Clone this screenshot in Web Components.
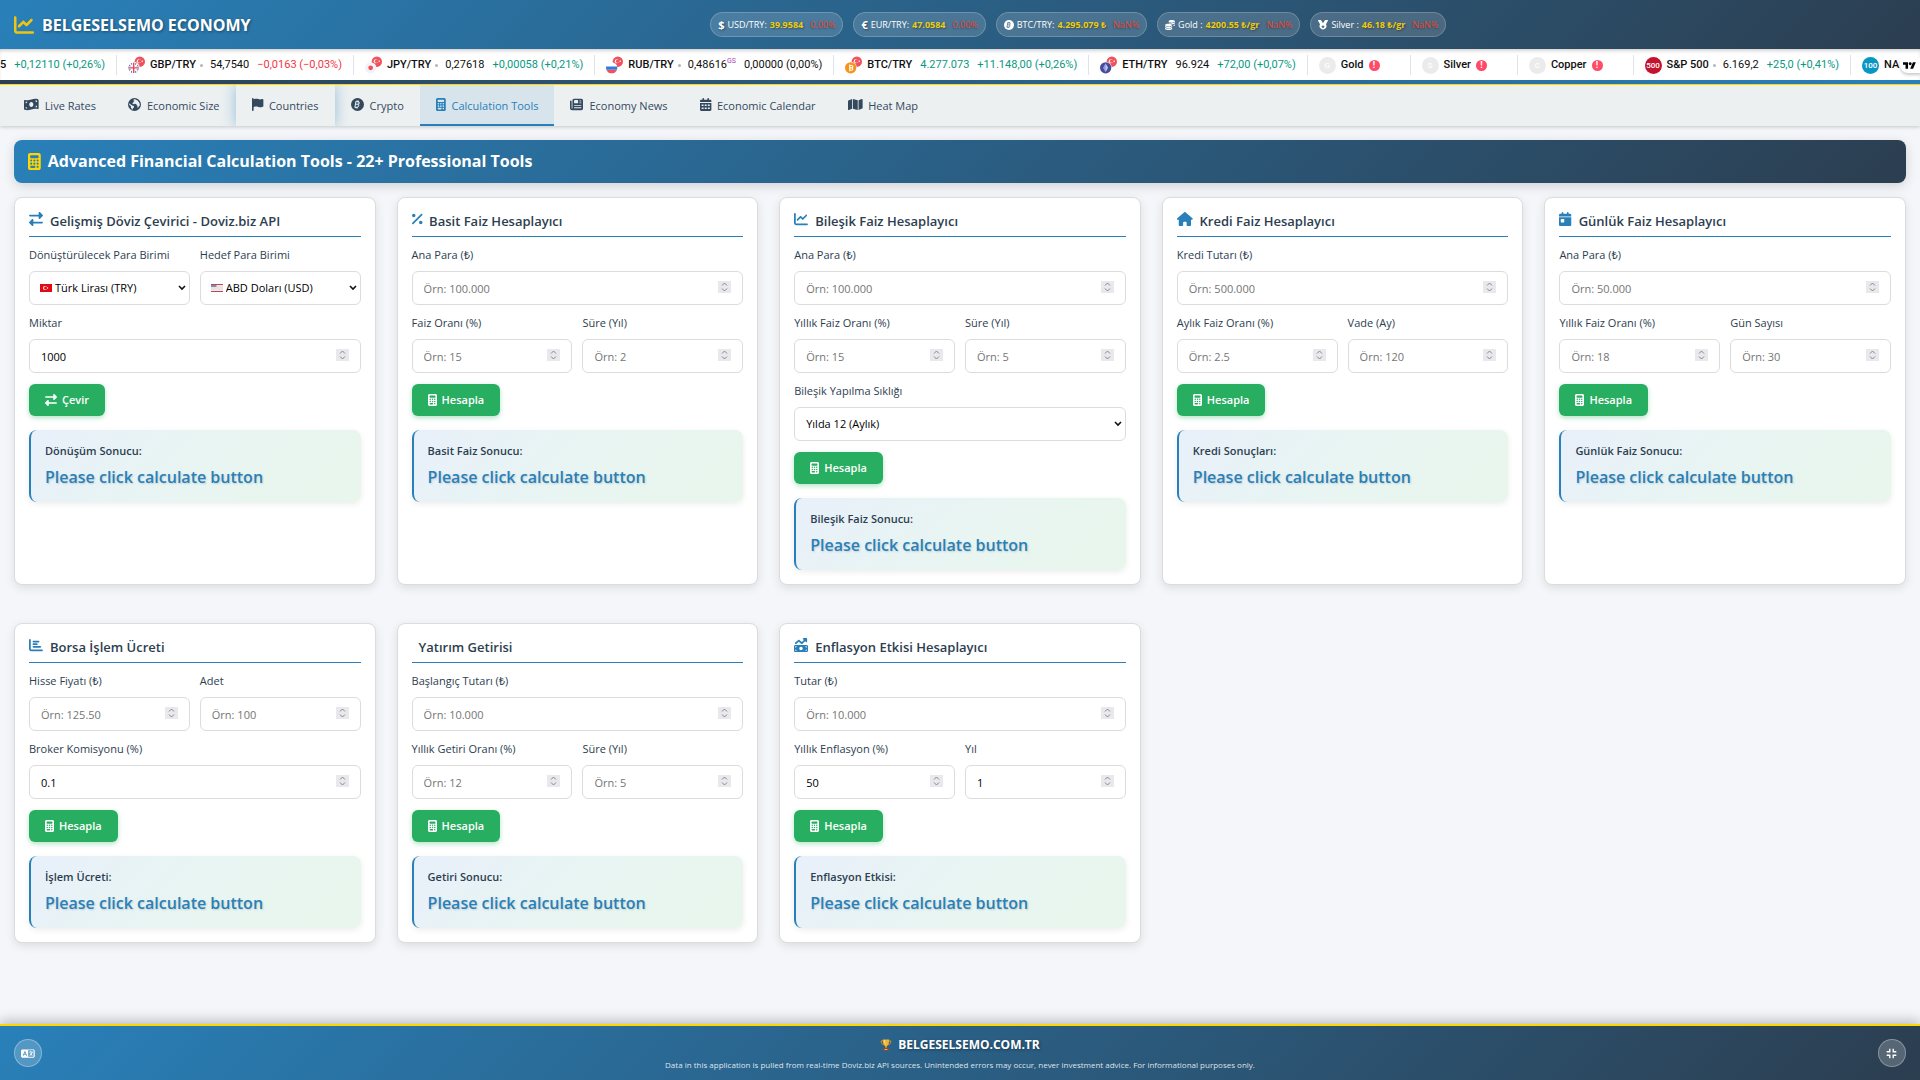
<!DOCTYPE html>
<html lang="tr">
<head>
<meta charset="utf-8">
<title>Belgeselsemo Economy</title>
<style>
:root {
    --primary: #2980b9;
    --dark: #2c3e50;
    --gold: #ffd700;
    --green: #27ae60;
    --line: #dcdcdc;
    --bar: linear-gradient(135deg, #2980b9, #2c3e50);
}
body {
    margin: 0;
    min-height: 100vh;
    display: flex;
    flex-direction: column;
    background: #f5f6fa;
    color: var(--dark);
    font: 11px/16px "Open Sans", "Noto Sans", sans-serif;
}
main {
    flex: 1;
    padding: 14px;
}
.tools {
    display: grid;
    grid-template-columns: repeat(auto-fill, minmax(320px, 1fr));
    gap: 38px 21px;
    margin-top: 14px;
}
</style>
</head>
<body>

<econ-header></econ-header>
<market-ticker></market-ticker>

<nav-tabs>
    <nav-tab icon="money">Live Rates</nav-tab>
    <nav-tab icon="globe">Economic Size</nav-tab>
    <nav-tab icon="flag" glow>Countries</nav-tab>
    <nav-tab icon="bitcoin">Crypto</nav-tab>
    <nav-tab icon="calculator" active>Calculation Tools</nav-tab>
    <nav-tab icon="news">Economy News</nav-tab>
    <nav-tab icon="calendar">Economic Calendar</nav-tab>
    <nav-tab icon="map">Heat Map</nav-tab>
</nav-tabs>

<main>
    <section-banner icon="calculator">Advanced Financial Calculation Tools - 22+ Professional Tools</section-banner>

    <div class="tools">
        <calc-card icon="exchange" heading="Gelişmiş Döviz Çevirici - Doviz.biz API" button="Çevir" button-icon="exchange" result="Dönüşüm Sonucu:">
            <calc-field half label="Dönüştürülecek Para Birimi" options="Türk Lirası (TRY)" flag="tr"></calc-field>
            <calc-field half label="Hedef Para Birimi" options="ABD Doları (USD)" flag="us"></calc-field>
            <calc-field label="Miktar" value="1000"></calc-field>
        </calc-card>

        <calc-card icon="percent" heading="Basit Faiz Hesaplayıcı" result="Basit Faiz Sonucu:">
            <calc-field label="Ana Para (₺)" placeholder="Örn: 100.000"></calc-field>
            <calc-field half label="Faiz Oranı (%)" placeholder="Örn: 15"></calc-field>
            <calc-field half label="Süre (Yıl)" placeholder="Örn: 2"></calc-field>
        </calc-card>

        <calc-card icon="chart" heading="Bileşik Faiz Hesaplayıcı" result="Bileşik Faiz Sonucu:">
            <calc-field label="Ana Para (₺)" placeholder="Örn: 100.000"></calc-field>
            <calc-field half label="Yıllık Faiz Oranı (%)" placeholder="Örn: 15"></calc-field>
            <calc-field half label="Süre (Yıl)" placeholder="Örn: 5"></calc-field>
            <calc-field label="Bileşik Yapılma Sıklığı" options="Yılda 12 (Aylık)"></calc-field>
        </calc-card>

        <calc-card icon="home" heading="Kredi Faiz Hesaplayıcı" result="Kredi Sonuçları:">
            <calc-field label="Kredi Tutarı (₺)" placeholder="Örn: 500.000"></calc-field>
            <calc-field half label="Aylık Faiz Oranı (%)" placeholder="Örn: 2.5"></calc-field>
            <calc-field half label="Vade (Ay)" placeholder="Örn: 120"></calc-field>
        </calc-card>

        <calc-card icon="day" heading="Günlük Faiz Hesaplayıcı" result="Günlük Faiz Sonucu:">
            <calc-field label="Ana Para (₺)" placeholder="Örn: 50.000"></calc-field>
            <calc-field half label="Yıllık Faiz Oranı (%)" placeholder="Örn: 18"></calc-field>
            <calc-field half label="Gün Sayısı" placeholder="Örn: 30"></calc-field>
        </calc-card>

        <calc-card icon="bars" heading="Borsa İşlem Ücreti" result="İşlem Ücreti:">
            <calc-field half label="Hisse Fiyatı (₺)" placeholder="Örn: 125.50"></calc-field>
            <calc-field half label="Adet" placeholder="Örn: 100"></calc-field>
            <calc-field label="Broker Komisyonu (%)" value="0.1"></calc-field>
        </calc-card>

        <calc-card icon="none" heading="Yatırım Getirisi" result="Getiri Sonucu:">
            <calc-field label="Başlangıç Tutarı (₺)" placeholder="Örn: 10.000"></calc-field>
            <calc-field half label="Yıllık Getiri Oranı (%)" placeholder="Örn: 12"></calc-field>
            <calc-field half label="Süre (Yıl)" placeholder="Örn: 5"></calc-field>
        </calc-card>

        <calc-card icon="inflation" heading="Enflasyon Etkisi Hesaplayıcı" result="Enflasyon Etkisi:">
            <calc-field label="Tutar (₺)" placeholder="Örn: 10.000"></calc-field>
            <calc-field half label="Yıllık Enflasyon (%)" value="50"></calc-field>
            <calc-field half label="Yıl" value="1"></calc-field>
        </calc-card>
    </div>
</main>

<econ-footer></econ-footer>

<script>
//--------------------------------------------------------
// Icons: [viewBox width, viewBox height, markup]
//--------------------------------------------------------

const ICONS = {
    none: [0, 512, ""],
    calculator: [384, 512, `<path d="M64 0C28.7 0 0 28.7 0 64V448c0 35.3 28.7 64 64 64H320c35.3 0 64-28.7 64-64V64c0-35.3-28.7-64-64-64H64zM96 64H288c17.7 0 32 14.3 32 32v32c0 17.7-14.3 32-32 32H96c-17.7 0-32-14.3-32-32V96c0-17.7 14.3-32 32-32zm32 160a32 32 0 1 1 -64 0 32 32 0 1 1 64 0zM96 352a32 32 0 1 1 0-64 32 32 0 1 1 0 64zM64 416c0-17.7 14.3-32 32-32h96c17.7 0 32 14.3 32 32s-14.3 32-32 32H96c-17.7 0-32-14.3-32-32zM192 256a32 32 0 1 1 0-64 32 32 0 1 1 0 64zm32 64a32 32 0 1 1 -64 0 32 32 0 1 1 64 0zm64-64a32 32 0 1 1 0-64 32 32 0 1 1 0 64zm32 64a32 32 0 1 1 -64 0 32 32 0 1 1 64 0zM288 448a32 32 0 1 1 0-64 32 32 0 1 1 0 64z"/>`],
    chart: [512, 512, `<path d="M64 64c0-17.7-14.3-32-32-32S0 46.3 0 64V400c0 44.2 35.8 80 80 80H480c17.7 0 32-14.3 32-32s-14.3-32-32-32H80c-8.8 0-16-7.2-16-16V64zm406.6 86.6c12.5-12.5 12.5-32.8 0-45.3s-32.8-12.5-45.3 0L320 210.7l-57.4-57.4c-12.5-12.5-32.8-12.5-45.3 0l-112 112c-12.5 12.5-12.5 32.8 0 45.3s32.8 12.5 45.3 0L240 221.3l57.4 57.4c12.5 12.5 32.8 12.5 45.3 0l128-128z"/>`],
    home: [576, 512, `<path d="M575.8 255.5c0 18-15 32.1-32 32.1h-32l.7 160.2c0 2.7-.2 5.4-.5 8.1V472c0 22.1-17.9 40-40 40H392c-22.1 0-40-17.9-40-40V384c0-17.7-14.3-32-32-32H256c-17.7 0-32 14.3-32 32v88c0 22.1-17.9 40-40 40H104c-22.1 0-40-17.9-40-40V287.6H32c-18 0-32-14-32-32.1c0-9 3-17 10-24L266.4 8c7-7 15-8 22-8s15 2 21 7L564.8 231.5c8 7 12 15 11 24z"/>`],
    day: [448, 512, `<path d="M128 0c17.7 0 32 14.3 32 32V64H288V32c0-17.7 14.3-32 32-32s32 14.3 32 32V64h48c26.5 0 48 21.5 48 48v48H0V112C0 85.5 21.5 64 48 64H96V32c0-17.7 14.3-32 32-32zM0 192H448V464c0 26.5-21.5 48-48 48H48c-26.5 0-48-21.5-48-48V192zm80 64c-8.8 0-16 7.2-16 16v96c0 8.8 7.2 16 16 16h96c8.8 0 16-7.2 16-16V272c0-8.8-7.2-16-16-16H80z"/>`],
    calendar: [448, 512, `<path fill-rule="evenodd" d="M128 0c17.7 0 32 14.3 32 32V64H288V32c0-17.7 14.3-32 32-32s32 14.3 32 32V64h48c26.5 0 48 21.5 48 48v48H0V112C0 85.5 21.5 64 48 64H96V32c0-17.7 14.3-32 32-32zM0 192H448V464c0 26.5-21.5 48-48 48H48c-26.5 0-48-21.5-48-48V192zM64 256v56h76v-56zM186 256v56h76v-56zM308 256v56h76v-56zM64 376v60h76v-60zM186 376v60h76v-60zM308 376v60h76v-60z"/>`],
    percent: [384, 512, `<path d="M374.6 118.6c12.5-12.5 12.5-32.8 0-45.3s-32.8-12.5-45.3 0l-320 320c-12.5 12.5-12.5 32.8 0 45.3s32.8 12.5 45.3 0l320-320zM128 128A64 64 0 1 0 0 128a64 64 0 1 0 128 0zM384 384a64 64 0 1 0 -128 0 64 64 0 1 0 128 0z"/>`],
    exchange: [512, 512, `<path d="M32 96l320 0V32c0-12.9 7.8-24.6 19.8-29.6s25.7-2.2 34.9 6.9l96 96c6 6 9.4 14.1 9.4 22.6s-3.4 16.6-9.4 22.6l-96 96c-9.2 9.2-22.9 11.9-34.9 6.9s-19.8-16.6-19.8-29.6V160L32 160c-17.7 0-32-14.3-32-32s14.3-32 32-32zM480 352c17.7 0 32 14.3 32 32s-14.3 32-32 32H160v64c0 12.9-7.8 24.6-19.8 29.6s-25.7 2.2-34.9-6.9l-96-96c-6-6-9.4-14.1-9.4-22.6s3.4-16.6 9.4-22.6l96-96c9.2-9.2 22.9-11.9 34.9-6.9s19.8 16.6 19.8 29.6l0 64H480z"/>`],
    bars: [512, 512, `<path d="M32 32c17.7 0 32 14.3 32 32V400c0 8.8 7.2 16 16 16H480c17.7 0 32 14.3 32 32s-14.3 32-32 32H80c-44.2 0-80-35.8-80-80V64C0 46.3 14.3 32 32 32zm96 96c0-17.7 14.3-32 32-32l192 0c17.7 0 32 14.3 32 32s-14.3 32-32 32H160c-17.7 0-32-14.3-32-32zm32 64H288c17.7 0 32 14.3 32 32s-14.3 32-32 32H160c-17.7 0-32-14.3-32-32s14.3-32 32-32zm0 96H416c17.7 0 32 14.3 32 32s-14.3 32-32 32H160c-17.7 0-32-14.3-32-32s14.3-32 32-32z"/>`],
    inflation: [512, 512, `<path d="M470.7 9.4c3 3.1 5.3 6.6 6.9 10.3s2.4 7.8 2.4 12.2V128c0 17.7-14.3 32-32 32s-32-14.3-32-32V109.3L310.6 214.6c-11.8 11.8-30.8 12.6-43.5 1.7L176 138.1 84.8 216.3c-13.4 11.5-33.6 9.9-45.1-3.5s-9.9-33.6 3.5-45.1l112-96c12-10.3 29.7-10.3 41.7 0l89.5 76.7L370.7 64H352c-17.7 0-32-14.3-32-32s14.3-32 32-32h96c8.8 0 16.8 3.6 22.6 9.3zM0 304c0-26.5 21.5-48 48-48H464c26.5 0 48 21.5 48 48V464c0 26.5-21.5 48-48 48H48c-26.5 0-48-21.5-48-48V304zM48 416v48H96c0-26.5-21.5-48-48-48zM96 304H48v48c26.5 0 48-21.5 48-48zM464 416c-26.5 0-48 21.5-48 48h48V416zM416 304c0 26.5 21.5 48 48 48V304H416zm-96 80a64 64 0 1 0 -128 0 64 64 0 1 0 128 0z"/>`],
    money: [576, 512, `<path fill-rule="evenodd" d="M0 112.5V422.3c0 18 10.1 35 27 41.3c87 32.5 174 10.3 261-11.9c79.8-20.3 159.6-40.7 239.3-18.9c23 6.3 48.7-9.5 48.7-33.4V89.7c0-18-10.1-35-27-41.3C462 15.9 375 38.1 288 60.3C208.2 80.6 128.4 100.9 48.7 79.1C25.6 72.8 0 88.6 0 112.5zM288 352c-44.2 0-80-43-80-96s35.8-96 80-96s80 43 80 96s-35.8 96-80 96zM64 352c35 0 64 29 64 64c-22 0-43-3-64-8zM128 144c0 33-27 62-64 62v-62c20 3 43 3 64 0zM512 304v64c-22-3-43-4-64-2c0-34 29-62 64-62zM448 96c22-2 43 0 64 5v59c-35 0-64-29-64-64z"/>`],
    globe: [512, 512, `<path fill-rule="evenodd" d="M256 0a256 256 0 1 1 0 512a256 256 0 1 1 0-512zM58 210c-7 22-10 44-9 66l50 28c12 7 16 18 16 31v42c0 14 10 26 24 30l12 44c5 14 25 12 27-4c4-27 14-38 31-53c18-16 31-34 24-63c-7-26-34-31-61-40c-20-6-35-24-57-25zM300 60c-18-10-53-8-70-4c-16 6-24 22-14 34c12 14 32 5 38 20c5 16-22 18-32 32c-10 13-3 34-20 45c-12 8-34 7-36 24c-2 13 13 17 30 17c20 0 22 14 38 16c18 2 20-20 40-22c24-2 44 6 54 27c10 20 12 40 32 42c22 2 15 28 11 44c-4 20 3 47 20 48c18 0 20-32 32-46c14-17 37-25 42-50c5-90-50-190-165-227z"/>`],
    flag: [448, 512, `<path d="M64 32C64 14.3 49.7 0 32 0S0 14.3 0 32V480c0 17.7 14.3 32 32 32s32-14.3 32-32V352l64-16c41-10 85-5 123 14c45 22 96 25 142 7l35-13c12-5 20-16 20-30V66c0-23-24-38-45-28l-9 5c-47 23-101 23-147 0c-35-18-76-22-114-13L64 48V32z"/>`],
    bitcoin: [512, 512, `<circle cx="256" cy="256" r="256"/><path fill="none" stroke="var(--hole, #ecf0f1)" stroke-width="40" d="M196 128l-42 236M170 150h90c90 0 80 100-10 100h-70M250 250c90 0 70 110-30 110h-80M244 96l-8 48M294 104l-8 48M200 360l-8 50M250 360l-8 50"/>`],
    news: [512, 512, `<path fill-rule="evenodd" d="M96 96c0-35 29-64 64-64H448c35 0 64 29 64 64V416c0 35-29 64-64 64H80c-44 0-80-36-80-80V128c0-18 14-32 32-32s32 14 32 32V400c0 9 7 16 16 16s16-7 16-16zM160 104v80c0 13 11 24 24 24H296c13 0 24-11 24-24V104c0-13-11-24-24-24H184c-13 0-24 11-24 24zM368 96v32h80V96zM368 176v32h80V176zM160 272v32H448V272zM160 368v32H448V368z"/>`],
    map: [576, 512, `<path d="M384 476.1L192 421.2V35.9L384 90.8zm32-1.2V88.4L543.1 37.5c15.8-6.3 32.9 5.3 32.9 22.3V394.6c0 9.8-6 18.6-15.1 22.3zM15.1 95.1L160 37.2V423.6L32.9 474.5C17.1 480.8 0 469.2 0 452.2V117.4c0-9.8 6-18.6 15.1-22.3z"/>`],
    coins: [512, 512, `<path d="M180 70c0-38 74-70 166-70s166 32 166 70-74 70-166 70-166-32-166-70zM512 118v40c0 30-46 56-112 66-30-30-90-48-160-50-38-14-60-34-60-56 30 28 90 46 166 46s136-18 166-46zM512 214v40c0 24-30 46-76 59v-54c32-9 58-24 76-45zM0 260c0-38 74-70 166-70s204 32 204 70-112 70-204 70S0 298 0 260zM370 310v40c0 38-92 70-184 70S0 388 0 350v-40c30 28 90 46 166 46s174-18 204-46zM370 402v40c0 38-92 70-184 70S0 480 0 442v-40c30 28 90 46 166 46s174-18 204-46z"/>`],
    medal: [512, 512, `<path fill-rule="evenodd" d="M4 38C-6 20 6 0 26 0h106c12 0 22 6 28 16l96 144L352 16c6-10 16-16 28-16h106c20 0 32 20 22 38L408 214a176 176 0 1 1-304 0zM256 244l-28 58-64 9 46 45-11 64 57-30 57 30-11-64 46-45-64-9z"/>`],
    language: [640, 512, `<path fill-rule="evenodd" d="M64 64h512c35 0 64 29 64 64v256c0 35-29 64-64 64H64c-35 0-64-29-64-64V128c0-35 29-64 64-64zM336 104v304h248V104zM164 156l-86 200h44l18-44h82l18 44h44l-86-200zM181 216l25 60h-50z"/><path d="M440 140h40v36h80v36h-24c-8 34-22 62-42 86 16 12 32 20 50 26l-16 34c-22-8-44-20-62-34-18 16-40 28-62 36l-16-34c18-6 34-14 48-26-14-16-24-34-32-54h38c6 10 12 20 22 30 12-16 22-38 28-64H372v-36h68z"/>`],
    compress: [512, 512, `<path d="M144 32h64v176H32v-64h112zM304 32h64v112h112v64H304zM32 304h176v176h-64V368H32zM304 304h176v64H368v112h-64z"/>`],
    trophy: [512, 512, `<path fill="none" stroke="#e89b1c" stroke-width="36" d="M130 80H50c0 110 40 150 110 160M382 80h80c0 110-40 150-110 160"/><path fill="#f5b32e" d="M120 20h272c0 150-30 240-100 280v60h-72v-60C150 260 120 170 120 20z"/><path fill="#ffe08a" d="M170 50h50c0 90 6 150 30 200-60-30-80-110-80-200z"/><path fill="#c97a12" d="M214 330h84v60h-84z"/><path fill="#8c4a3c" d="M130 390h252v110H130z"/><path fill="#f2c14e" d="M196 425h120v40H196z"/>`]
};

const FLAGS = {
    tr: `<svg xmlns="http://www.w3.org/2000/svg" viewBox="0 0 24 16"><path fill="#e30a17" d="M0 0h24v16H0z"/><circle cx="10" cy="8" r="4" fill="#fff"/><circle cx="11.2" cy="8" r="3.2" fill="#e30a17"/><circle cx="15" cy="8" r="1.5" fill="#fff"/></svg>`,
    us: `<svg xmlns="http://www.w3.org/2000/svg" viewBox="0 0 24 16"><path fill="#eee" d="M0 0h24v16H0z"/><path stroke="#c24452" stroke-width="2" d="M0 1h24M0 15h24"/><path stroke="#e6bcc1" d="M0 6h24M0 10h24"/><path fill="#7f8fb3" d="M0 2h11v4H0z"/></svg>`
};

const CHEVRON = `<svg xmlns="http://www.w3.org/2000/svg" viewBox="0 0 8 6"><path fill="none" stroke="#111" stroke-width="1.6" d="M1 1l3 3 3-3"/></svg>`;
const SPINNER = `<svg xmlns="http://www.w3.org/2000/svg" viewBox="0 0 13 12"><path fill="#e9e9ed" d="M0 0h13v12H0z"/><path fill="none" stroke="#85858c" d="M4 4.5l2.5-2.5L9 4.5M4 7.5l2.5 2.5L9 7.5"/></svg>`;

const svgUrl = (svg) => `url("data:image/svg+xml,${encodeURIComponent(svg)}")`;

class EconIcon extends HTMLElement {
    constructor() {
        super();
        this.attachShadow({ mode: "open" });
    }

    connectedCallback() {
        const [w, h, body] = ICONS[this.getAttribute("name")] || ICONS.none;
        this.shadowRoot.innerHTML = `
          <style>
          :host { display: inline-flex; flex: none; }
          svg { height: 1em; fill: currentColor; overflow: visible; }
          </style>
          ${w ? `<svg viewBox="0 0 ${w} ${h}" style="aspect-ratio: ${w} / ${h}" aria-hidden="true">${body}</svg>` : ""}
        `;
    }
}

//--------------------------------------------------------
// Header
//--------------------------------------------------------

class PricePill extends HTMLElement {
    constructor() {
        super();
        this.attachShadow({ mode: "open" });
    }

    connectedCallback() {
        const icon = this.getAttribute("icon");
        const sign = this.getAttribute("sign");
        this.shadowRoot.innerHTML = `
          <style>
          :host {
              --hole: #4c7291;
              display: flex;
              align-items: center;
              gap: 3px;
              height: 23px;
              padding: 0 7px;
              border: 1px solid rgba(255, 255, 255, .2);
              border-radius: 14px;
              background: rgba(255, 255, 255, .15);
              color: #fff;
              font-size: 9px;
              white-space: nowrap;
          }
          econ-icon { font-size: 10px; }
          b { color: var(--gold); opacity: .9; text-shadow: 1px 1px 2px rgba(0, 0, 0, .4); }
          .sign { color: #fff; font-size: 11px; opacity: 1; }
          .change {
              margin-left: 4px;
              color: #e74c3c;
              text-shadow: 0 1px 2px rgba(0, 0, 0, .4);
          }
          </style>
          ${icon ? `<econ-icon name="${icon}"></econ-icon>` : `<b class="sign">${sign}</b>`}
          <slot></slot>
          <b>${this.getAttribute("price")}</b>
          <span class="change">${this.getAttribute("change")}</span>
        `;
    }
}

class EconHeader extends HTMLElement {
    constructor() {
        super();
        this.attachShadow({ mode: "open" });
        this.shadowRoot.innerHTML = `
          <style>
          :host {
              display: block;
              background: var(--bar);
          }
          header {
              display: flex;
              align-items: center;
              height: 49px;
              padding: 0 14px;
          }
          h1 {
              display: flex;
              align-items: center;
              gap: 8px;
              margin: 0;
              color: #fff;
              font-size: 16px;
              font-weight: 700;
              text-shadow: 1px 1px 3px rgba(0, 0, 0, .4);
              white-space: nowrap;
          }
          h1 econ-icon { color: #f1c40f; font-size: 20px; }
          .prices {
              display: flex;
              gap: 10px;
              margin: 0 auto;
          }
          </style>
          <header>
              <h1><econ-icon name="chart"></econ-icon>BELGESELSEMO ECONOMY</h1>
              <div class="prices">
                  <price-pill sign="$" price="39.9584" change="0.00%">USD/TRY:</price-pill>
                  <price-pill sign="€" price="47.0584" change="0.00%">EUR/TRY:</price-pill>
                  <price-pill icon="bitcoin" price="4.295.079 ₺" change="NaN%">BTC/TRY:</price-pill>
                  <price-pill icon="coins" price="4200.55 ₺/gr" change="NaN%">Gold :</price-pill>
                  <price-pill icon="medal" price="46.18 ₺/gr" change="NaN%">Silver :</price-pill>
              </div>
          </header>
        `;
    }
}

//--------------------------------------------------------
// Ticker
//--------------------------------------------------------

// Small round pictures used in the ticker, drawn on an 18 x 18 grid
const TURKEY = `<circle cx="12.5" cy="5.5" r="5.5" fill="#f0515a"/><circle cx="11.5" cy="5" r="2.2" fill="#fff"/><circle cx="12.2" cy="5" r="1.7" fill="#f0515a"/><circle cx="15" cy="5" r=".8" fill="#fff"/>`;
const COINS = {
    gbp: `${TURKEY}<circle cx="6" cy="12" r="6.5" fill="#fff"/><circle cx="6" cy="12" r="5.5" fill="#1a47b8"/><path stroke="#fff" stroke-width="2" d="M2 8l8 8M10 8l-8 8"/><path stroke="#fff" stroke-width="3.5" d="M6 6.5v11M.5 12h11"/><path stroke="#f0424f" stroke-width="1.5" d="M6 6.5v11M.5 12h11"/>`,
    jpy: `${TURKEY}<circle cx="6" cy="12" r="6" fill="#f0f3fa"/><circle cx="6" cy="12" r="2.5" fill="#f0515a"/>`,
    rub: `${TURKEY}<circle cx="6" cy="12" r="6" fill="#fff"/><path fill="#2a7de1" d="M.2 10.5h11.6a6 6 0 0 1-.2 3.5H.4A6 6 0 0 1 .2 10.5z"/><path fill="#f0515a" d="M.4 14h11.2a6 6 0 0 1-11.2 0z"/>`,
    btc: `${TURKEY}<circle cx="6" cy="12" r="6.5" fill="#fff"/><circle cx="6" cy="12" r="6" fill="#f7931a"/><path fill="none" stroke="#fff" stroke-width="1.2" d="M4.5 9.5h2.5a1.2 1.2 0 0 1 0 2.5h-2M7 12a1.2 1.2 0 0 1 0 2.5h-2.5M5 8.5v7"/>`,
    eth: `${TURKEY}<circle cx="6" cy="12" r="6.5" fill="#fff"/><circle cx="6" cy="12" r="6" fill="#454c9c"/><path fill="#c5cbf5" d="M6 7.5l2.5 4.5L6 16.5 3.5 12z"/><path fill="#8f98dd" d="M6 7.5V16.5L3.5 12z"/>`
};

class TickerItem extends HTMLElement {
    constructor() {
        super();
        this.attachShadow({ mode: "open" });
    }

    connectedCallback() {
        const get = (name) => this.getAttribute(name) || "";
        const badge = this.hasAttribute("error");
        const coin = get("coin")
            ? `<svg width="17" height="18" viewBox="0 0 18 18" aria-hidden="true">${COINS[get("coin")]}</svg>`
            : get("letter") ? `<span class="disc">${get("letter")}</span>` : "";
        this.shadowRoot.innerHTML = `
          <style>
          :host {
              display: flex;
              flex: none;
              align-items: center;
              gap: 8px;
              height: 20px;
              padding: 0 11px;
              border-right: 1px solid #e0e3eb;
              color: #0f0f0f;
              font-family: Roboto, "Noto Sans", sans-serif;
              font-size: 11px;
              white-space: nowrap;
          }
          :host(:first-child) { padding-left: 0; }
          :host(:last-child) { padding-right: 0; border-right: 0; }
          :host([error]) { padding-right: 30px; }
          .name { display: flex; align-items: center; gap: 5px; font-weight: 500; }
          .dot { width: 3px; height: 3px; margin: 0 -1px; border-radius: 50%; background: #b2b5be; }
          .disc {
              width: 17px;
              border-radius: 50%;
              background: ${get("color") || "#ebebeb"};
              color: #fff;
              font-size: 8px;
              line-height: 17px;
              text-align: center;
          }
          .up { color: #089981; }
          .down { color: #f23645; }
          sup { color: #ab47bc; font-size: 7px; line-height: 0; }
          .error {
              width: 11px;
              border-radius: 50%;
              background: #ff4a68;
              color: #fff;
              font-size: 9px;
              font-weight: 700;
              line-height: 11px;
              text-align: center;
          }
          </style>
          <span class="name">${coin}<slot></slot>${badge ? `<span class="error">!</span>` : ""}${this.hasAttribute("dot") ? `<span class="dot"></span>` : ""}</span>
          ${get("price") ? `<span class="${get("price-dir")}">${get("price")}${get("mark") && `<sup>${get("mark")}</sup>`}</span>` : ""}
          ${get("change") ? `<span class="${get("dir")}">${get("change")}</span>` : ""}
        `;
    }
}

class MarketTicker extends HTMLElement {
    constructor() {
        super();
        this.attachShadow({ mode: "open" });
        this.shadowRoot.innerHTML = `
          <style>
          :host {
              display: block;
              position: relative;
              padding-bottom: 4px;
              border-bottom: 1px solid var(--gold);
              background: linear-gradient(135deg, #2c3e50, #2980b9);
          }
          .track {
              display: flex;
              align-items: center;
              height: 30px;
              padding-top: 1px;
              overflow: hidden;
              background: #fff;
              box-shadow: inset 0 3px 4px -2px rgba(0, 0, 0, .25);
          }
          .logo {
              position: absolute;
              top: 9px;
              right: 0;
              display: flex;
              padding: 4px 4px 4px 3px;
              border-radius: 0 0 0 8px;
              background: #fff;
              box-shadow: 0 2px 3px rgba(0, 0, 0, .2);
          }
          </style>
          <div class="track">
              <ticker-item change="+0,12110 (+0,26%)" dir="up">5</ticker-item>
              <ticker-item coin="gbp" dot price="54,7540" change="−0,0163 (−0,03%)" dir="down">GBP/TRY</ticker-item>
              <ticker-item coin="jpy" dot price="0,27618" change="+0,00058 (+0,21%)" dir="up">JPY/TRY</ticker-item>
              <ticker-item coin="rub" dot price="0,48616" mark="GS" change="0,00000 (0,00%)">RUB/TRY</ticker-item>
              <ticker-item coin="btc" price="4.277.073" price-dir="up" change="+11.148,00 (+0,26%)" dir="up">BTC/TRY</ticker-item>
              <ticker-item coin="eth" price="96.924" change="+72,00 (+0,07%)" dir="up">ETH/TRY</ticker-item>
              <ticker-item letter="G" error>Gold</ticker-item>
              <ticker-item letter="S" error>Silver</ticker-item>
              <ticker-item letter="C" error>Copper</ticker-item>
              <ticker-item letter="500" color="#c4122f" dot price="6.169,2" change="+25,0 (+0,41%)" dir="up">S&amp;P 500</ticker-item>
              <ticker-item letter="100" color="#0a96c3">NA</ticker-item>
          </div>
          <div class="logo"><svg width="13" height="7" viewBox="0 0 36 18" aria-hidden="true"><path d="M0 0h14v18H7V7H0zM28 18h-8L27.5 0h8z"/><circle cx="20" cy="4" r="4"/></svg></div>
        `;
    }
}

//--------------------------------------------------------
// Navigation
//--------------------------------------------------------

class NavTabs extends HTMLElement {
    constructor() {
        super();
        this.attachShadow({ mode: "open" });
        this.shadowRoot.innerHTML = `
          <style>
          :host {
              display: block;
              background: #ecf0f1;
              box-shadow: 0 1px 4px rgba(0, 0, 0, .2);
          }
          nav {
              display: flex;
              padding: 0 8px;
              overflow: hidden;
          }
          </style>
          <nav><slot></slot></nav>
        `;
    }
}

class NavTab extends HTMLElement {
    constructor() {
        super();
        this.attachShadow({ mode: "open" });
        this.shadowRoot.innerHTML = `
          <style>
          :host { display: block; }
          :host([glow]) {
              z-index: 1;
              background: #ecf0f1;
              box-shadow: 0 0 14px rgba(41, 128, 185, .45);
          }
          button {
              display: flex;
              align-items: center;
              gap: 6px;
              height: 41px;
              padding: 2px 16px 0;
              border: 0;
              border-bottom: 2px solid transparent;
              background: none;
              color: #34495e;
              font: inherit;
              font-weight: 500;
              white-space: nowrap;
              cursor: pointer;
          }
          econ-icon { font-size: 13px; margin-bottom: 2px; }
          :host([active]) button {
              border-bottom-color: var(--primary);
              background: rgba(41, 128, 185, .1);
              color: var(--primary);
          }
          </style>
          <button type="button"><econ-icon></econ-icon><slot></slot></button>
        `;
    }

    connectedCallback() {
        const icon = document.createElement("econ-icon");
        icon.setAttribute("name", this.getAttribute("icon"));
        this.shadowRoot.querySelector("econ-icon").replaceWith(icon);
    }
}

class SectionBanner extends HTMLElement {
    constructor() {
        super();
        this.attachShadow({ mode: "open" });
    }

    connectedCallback() {
        this.shadowRoot.innerHTML = `
          <style>
          :host {
              display: block;
              padding: 10px 14px;
              border-radius: 8px;
              background: var(--bar);
              box-shadow: 0 3px 12px rgba(0, 0, 0, .15);
              color: #fff;
          }
          h2 {
              display: flex;
              align-items: center;
              gap: 7px;
              margin: 0;
              font-size: 16px;
              font-weight: 700;
              line-height: 23px;
          }
          econ-icon { color: var(--gold); font-size: 17px; }
          </style>
          <h2><econ-icon name="${this.getAttribute("icon")}"></econ-icon><slot></slot></h2>
        `;
    }
}

//--------------------------------------------------------
// Calculator
//--------------------------------------------------------

class CalcField extends HTMLElement {
    constructor() {
        super();
        this.attachShadow({ mode: "open" });
    }

    connectedCallback() {
        const options = this.getAttribute("options");
        const flag = this.getAttribute("flag");
        this.shadowRoot.innerHTML = `
          <style>
          :host { display: block; grid-column: span 2; min-width: 0; }
          :host([half]) { grid-column: span 1; }
          label { display: block; margin-bottom: 8px; color: var(--dark); }
          input, select {
              display: block;
              box-sizing: border-box;
              width: 100%;
              height: 34px;
              margin: 0;
              padding: 0 11px;
              border: 1px solid var(--line);
              border-radius: 6px;
              outline: 0;
              background-color: #fff;
              color: #000;
              font: inherit;
          }
          input::placeholder { color: #757575; opacity: 1; }
          input::-webkit-inner-spin-button {
              -webkit-appearance: none;
              width: 13px;
              height: 12px;
              background: ${svgUrl(SPINNER)};
              opacity: 1;
          }
          select {
              appearance: none;
              background: ${svgUrl(CHEVRON)} right 3px center / 8px 6px no-repeat #fff;
          }
          select.flag {
              padding-left: 25px;
              background: ${svgUrl(FLAGS[flag] || "")} 10px center / 12px 8px no-repeat,
                  ${svgUrl(CHEVRON)} right 3px center / 8px 6px no-repeat #fff;
          }
          </style>
          <label for="field">${this.getAttribute("label")}</label>
          ${options ? `<select id="field"><option>${options}</option></select>` : `<input id="field" type="number" step="any">`}
        `;
        const field = this.shadowRoot.querySelector("#field");
        if (options) {
            field.classList.toggle("flag", Boolean(flag));
            return;
        }
        field.placeholder = this.getAttribute("placeholder") || "";
        field.value = this.getAttribute("value") || "";
    }
}

class CalcCard extends HTMLElement {
    constructor() {
        super();
        this.attachShadow({ mode: "open" });
    }

    connectedCallback() {
        this.shadowRoot.innerHTML = `
          <style>
          :host {
              display: block;
              padding: 14px;
              border: 1px solid var(--line);
              border-radius: 8px;
              background: #fff;
              box-shadow: 0 3px 10px rgba(0, 0, 0, .1);
          }
          h3 {
              display: flex;
              align-items: flex-start;
              gap: 7px;
              height: 24px;
              margin: 0 0 10px;
              border-bottom: 1px solid var(--primary);
              font-size: 13px;
              font-weight: 600;
              line-height: 19px;
          }
          h3 econ-icon { color: var(--primary); font-size: 14px; }
          .fields {
              display: grid;
              grid-template-columns: 1fr 1fr;
              gap: 10px;
          }
          button {
              display: flex;
              align-items: center;
              gap: 5px;
              height: 32px;
              margin: 11px 0 14px;
              padding: 0 16px;
              border: 0;
              border-radius: 6px;
              background: var(--green);
              box-shadow: 0 2px 5px rgba(39, 174, 96, .35);
              color: #fff;
              font: inherit;
              font-weight: 600;
              cursor: pointer;
          }
          button econ-icon { font-size: 12px; }
          </style>
          <h3><econ-icon name="${this.getAttribute("icon")}"></econ-icon>${this.getAttribute("heading")}</h3>
          <div class="fields"><slot></slot></div>
          <button type="button"><econ-icon name="${this.getAttribute("button-icon") || "calculator"}"></econ-icon>${this.getAttribute("button") || "Hesapla"}</button>
          <calc-result label="${this.getAttribute("result")}">Please click calculate button</calc-result>
        `;
    }
}

class CalcResult extends HTMLElement {
    constructor() {
        super();
        this.attachShadow({ mode: "open" });
    }

    connectedCallback() {
        this.shadowRoot.innerHTML = `
          <style>
          :host {
              display: block;
              padding: 13px 14px;
              border-left: 2px solid var(--primary);
              border-radius: 8px;
              background: linear-gradient(135deg, #e8f0fa, #e8f5f2 50%, #e8f6ec);
              box-shadow: 0 2px 6px rgba(0, 0, 0, .08);
          }
          strong { display: block; margin-bottom: 6px; font-weight: 600; }
          output {
              display: block;
              color: var(--primary);
              font-size: 16px;
              font-weight: 600;
              line-height: 24px;
              text-shadow: 1px 1px 2px rgba(0, 0, 0, .15);
          }
          </style>
          <strong>${this.getAttribute("label")}</strong>
          <output><slot></slot></output>
        `;
    }
}

//--------------------------------------------------------
// Footer
//--------------------------------------------------------

class EconFooter extends HTMLElement {
    constructor() {
        super();
        this.attachShadow({ mode: "open" });
        this.shadowRoot.innerHTML = `
          <style>
          :host { display: block; }
          footer {
              display: flex;
              align-items: center;
              justify-content: space-between;
              height: 54px;
              padding: 0 14px;
              border-top: 2px solid var(--gold);
              background: var(--bar);
              box-shadow: 0 -3px 12px rgba(0, 0, 0, .25);
              color: #fff;
          }
          .text { padding-top: 4px; text-align: center; }
          strong {
              display: flex;
              align-items: center;
              justify-content: center;
              gap: 6px;
              margin-bottom: 4px;
              font-size: 12px;
              text-shadow: 1px 1px 3px rgba(0, 0, 0, .4);
          }
          p { margin: 0; color: rgba(255, 255, 255, .85); font-size: 8px; }
          button {
              display: flex;
              align-items: center;
              justify-content: center;
              width: 28px;
              height: 28px;
              padding: 0;
              border: 1px solid rgba(255, 255, 255, .3);
              border-radius: 50%;
              background: rgba(255, 255, 255, .2);
              color: #fff;
              font-size: 11px;
              cursor: pointer;
          }
          </style>
          <footer>
              <button type="button" aria-label="Language"><econ-icon name="language"></econ-icon></button>
              <div class="text">
                  <strong><econ-icon name="trophy"></econ-icon>BELGESELSEMO.COM.TR</strong>
                  <p>Data in this application is pulled from real-time Doviz.biz API sources. Unintended errors may occur, never investment advice. For informational purposes only.</p>
              </div>
              <button type="button" aria-label="Exit full screen"><econ-icon name="compress"></econ-icon></button>
          </footer>
        `;
    }
}

customElements.define("econ-icon", EconIcon);
customElements.define("price-pill", PricePill);
customElements.define("econ-header", EconHeader);
customElements.define("ticker-item", TickerItem);
customElements.define("market-ticker", MarketTicker);
customElements.define("nav-tab", NavTab);
customElements.define("nav-tabs", NavTabs);
customElements.define("section-banner", SectionBanner);
customElements.define("calc-field", CalcField);
customElements.define("calc-result", CalcResult);
customElements.define("calc-card", CalcCard);
customElements.define("econ-footer", EconFooter);
</script>
</body>
</html>
